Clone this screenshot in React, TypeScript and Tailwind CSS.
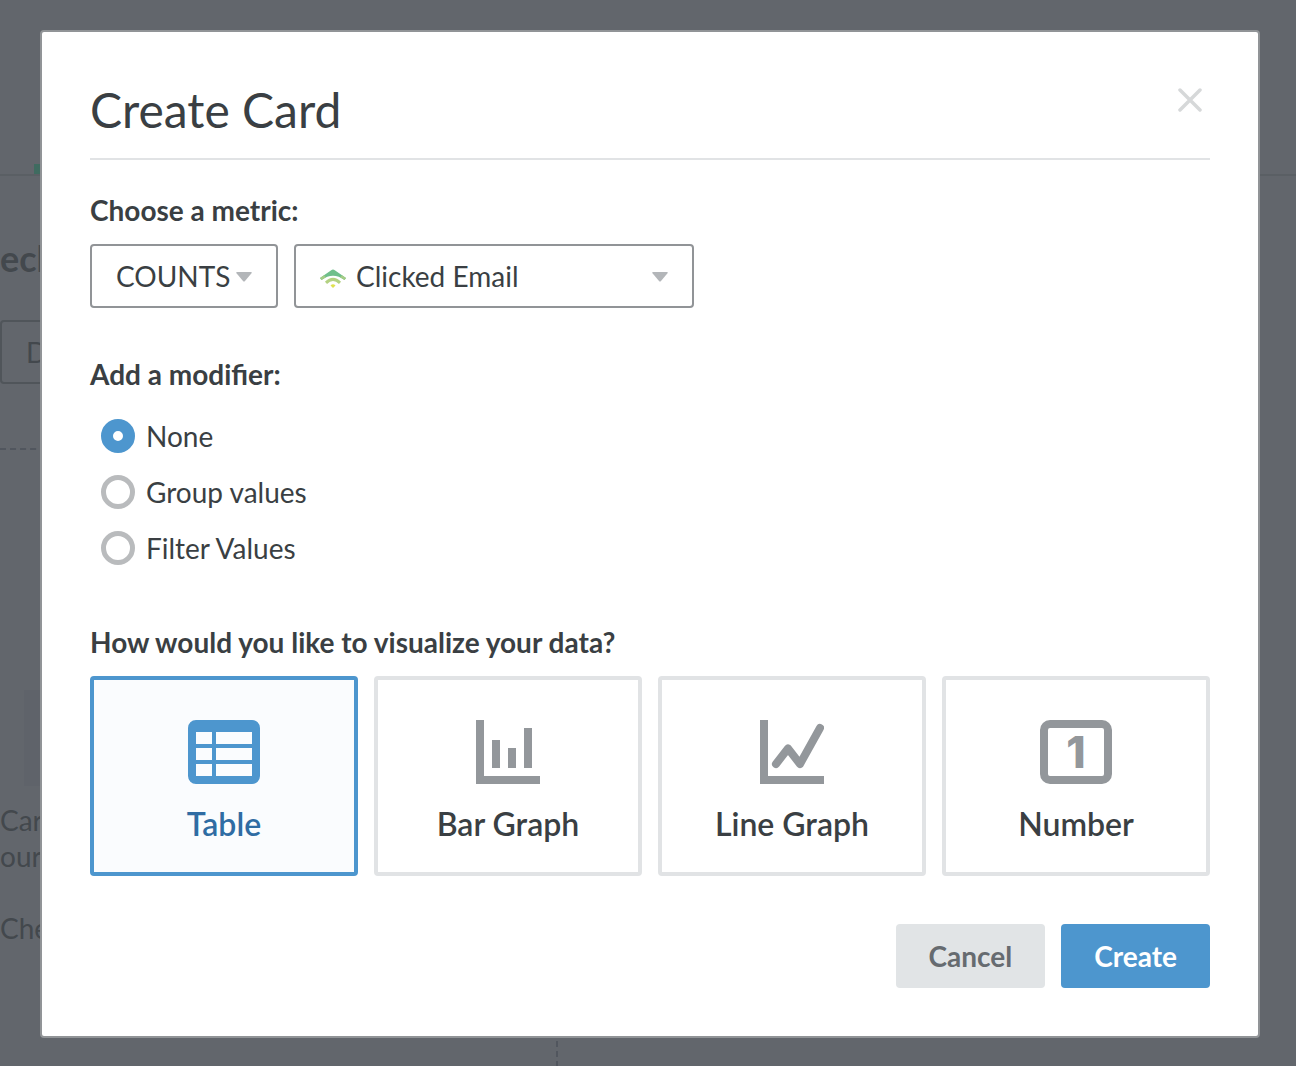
import React, { useState } from 'react';

const MODIFIERS = ['None', 'Group values', 'Filter Values'];

function TableIcon() {
  return (
    <svg width="72" height="64" viewBox="0 0 72 64" fill="currentColor" aria-hidden="true">
      <path
        fillRule="evenodd"
        d="M8 0h56a8 8 0 0 1 8 8v48a8 8 0 0 1-8 8H8a8 8 0 0 1-8-8V8a8 8 0 0 1 8-8Z
          M8 12v12h16V12Z M28 12v12h36V12Z M8 28v12h16V28Z M28 28v12h36V28Z
          M8 44v12h16V44Z M28 44v12h36V44Z"
      />
    </svg>
  );
}

function BarGraphIcon() {
  return (
    <svg width="64" height="64" viewBox="0 0 64 64" fill="currentColor" aria-hidden="true">
      <path d="M0 0h8v56h56v8H0Z M16 20h8v28h-8Z M32 28h8v20h-8Z M48 8h8v40h-8Z" />
    </svg>
  );
}

function LineGraphIcon() {
  return (
    <svg width="64" height="64" viewBox="0 0 64 64" fill="none" aria-hidden="true">
      <path d="M0 0h8v56h56v8H0Z" fill="currentColor" />
      <path
        d="M16 44 28 28.500 40 44 60 8"
        stroke="currentColor"
        strokeWidth="8"
        strokeLinecap="round"
        strokeLinejoin="round"
      />
    </svg>
  );
}

function NumberIcon() {
  return (
    <span
      aria-hidden="true"
      className="flex h-16 w-[72px] items-center justify-center rounded-[10px] border-8
        border-current font-[Inter,sans-serif] text-[44px] leading-none font-extrabold"
    >
      1
    </span>
  );
}

function MetricIcon() {
  return (
    <svg width="26" height="20" viewBox="0 0 26 20" fill="none" aria-hidden="true">
      <path d="M0 10 11.200 2.200Q13 1 14.800 2.200L26 10 24.500 12Q13 3.500 1.500 12Z" fill="#6fbf8b" />
      <path d="M0 10 4 7.200 6 9.200 1.500 12Z M26 10 22 7.200 20 9.200 24.500 12Z" fill="#a5cc85" />
      <path d="M6 14.800Q13 8 20 14.800" stroke="#b3d182" strokeWidth="3" />
      <path d="M10.500 17.500Q13 15 15.500 17.500L13 20Z" fill="#dfe14f" />
    </svg>
  );
}

function Caret() {
  return (
    <svg
      width="16"
      height="10"
      viewBox="0 0 16 10"
      aria-hidden="true"
      className="pointer-events-none absolute top-7 right-[26px]"
    >
      <path d="M1 0h14q1.500 0 .5 1.200L9 9Q8 10 7 9L.5 1.200Q-.5 0 1 0Z" fill="#b3b6b9" />
    </svg>
  );
}

const VISUALIZATIONS = [
  { name: 'Table', Icon: TableIcon },
  { name: 'Bar Graph', Icon: BarGraphIcon },
  { name: 'Line Graph', Icon: LineGraphIcon },
  { name: 'Number', Icon: NumberIcon },
];

// Dimmed dashboard that shows around the edges of the dialog
function Backdrop() {
  return (
    <div
      aria-hidden="true"
      className="absolute inset-0 overflow-hidden bg-[#62666c] text-[28px] leading-9
        text-[#43484d]"
    >
      <div className="flex h-44 items-end border-b-2 border-[#5a5f64] pl-[34px]">
        <div className="h-2.5 w-40 bg-[#3f6b60]" />
      </div>
      <div className="mt-16 text-[36px] font-bold">ech</div>
      <div className="mt-11 flex h-16 w-48 items-center rounded border-2 border-[#50555a] pl-6">
        D
      </div>
      <div
        className="mt-16 h-[800px] w-[558px] border-t-2 border-r-2 border-dashed
          border-[#51565e]"
      >
        <div className="mt-60 ml-6 h-24 w-40 bg-[#5f636a]" />
        <div className="mt-4">Car</div>
        <div>our</div>
        <div className="mt-9">Che</div>
      </div>
    </div>
  );
}

export default function App() {
  const [modifier, setModifier] = useState('None');
  const [visualization, setVisualization] = useState('Table');

  return (
    <div
      className="relative min-h-screen pt-[30px] pr-9 pb-7 pl-10
        font-[Lato,'Open_Sans',sans-serif] text-[28px] leading-9 text-[#3a3f43]"
    >
      <Backdrop />

      <div
        role="dialog"
        aria-labelledby="dialog-title"
        className="relative rounded border-2 border-[#919497] bg-white p-12"
      >
        {/* Header */}
        <div className="flex items-start justify-between border-b-2 border-[#e1e3e5] pb-[18px]">
          <h1 id="dialog-title" className="text-[48px] leading-[60px]">
            Create Card
          </h1>
          <button
            type="button"
            aria-label="Close"
            className="flex h-10 w-10 items-center justify-center text-[#d6d8d9]"
          >
            <svg width="24" height="24" viewBox="0 0 24 24" aria-hidden="true">
              <path
                d="M2 2 22 22M22 2 2 22"
                stroke="currentColor"
                strokeWidth="3.500"
                strokeLinecap="round"
              />
            </svg>
          </button>
        </div>

        {/* Metric */}
        <label htmlFor="metric" className="mt-8 block font-bold">
          Choose a metric:
        </label>
        <div className="mt-4 flex gap-4">
          <div className="relative w-[188px]">
            <select
              aria-label="Measurement"
              className="h-16 w-full appearance-none rounded border-2 border-[#919497] bg-white
                pl-6"
            >
              <option>COUNTS</option>
            </select>
            <Caret />
          </div>
          <div className="relative w-[400px]">
            <select
              id="metric"
              className="h-16 w-full appearance-none rounded border-2 border-[#919497] bg-white
                pl-[60px]"
            >
              <option>Clicked Email</option>
            </select>
            <span className="pointer-events-none absolute top-6 left-[26px]">
              <MetricIcon />
            </span>
            <Caret />
          </div>
        </div>

        {/* Modifier */}
        <fieldset className="mt-12">
          <legend className="font-bold">Add a modifier:</legend>
          <div className="mt-4">
            {MODIFIERS.map((name) => (
              <label key={name} className="flex h-14 items-center gap-[11px] pl-[11px]">
                <input
                  type="radio"
                  name="modifier"
                  checked={modifier === name}
                  onChange={() => setModifier(name)}
                  className="h-[34px] w-[34px] appearance-none rounded-full border-5
                    border-[#b9bbbd] bg-white checked:border-12 checked:border-[#4d96ce]"
                />
                {name}
              </label>
            ))}
          </div>
        </fieldset>

        {/* Visualization */}
        <h2 className="mt-12 font-bold">How would you like to visualize your data?</h2>
        <div className="mt-4 grid grid-cols-4 gap-4">
          {VISUALIZATIONS.map(({ name, Icon }) => (
            <button
              key={name}
              type="button"
              aria-pressed={visualization === name}
              onClick={() => setVisualization(name)}
              className="group flex flex-col items-center rounded border-4 border-[#e1e3e5]
                bg-white pt-10 pb-7 aria-pressed:border-[#4d96ce] aria-pressed:bg-[#fafcfe]"
            >
              <span className="text-[#93979b] group-aria-pressed:text-[#4d96ce]">
                <Icon />
              </span>
              <span
                className="mt-5 text-[32px] leading-10 font-semibold
                  group-aria-pressed:text-[#2f6ca3]"
              >
                {name}
              </span>
            </button>
          ))}
        </div>

        {/* Actions */}
        <div className="mt-12 flex justify-end gap-4 font-bold">
          <button type="button" className="h-16 rounded bg-[#e1e4e6] px-[33px] text-[#666b70]">
            Cancel
          </button>
          <button type="button" className="h-16 rounded bg-[#4d96ce] px-[33px] text-white">
            Create
          </button>
        </div>
      </div>
    </div>
  );
}
